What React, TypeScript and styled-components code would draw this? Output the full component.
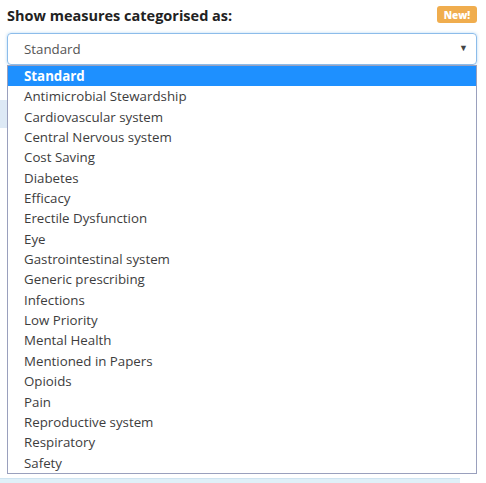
import styled, { createGlobalStyle } from "styled-components";

const GlobalStyle = createGlobalStyle`
  html, body {
    margin: 0;
    padding: 0;
    background: #fff;
  }
  body {
    font-family: "Open Sans", "Noto Sans", sans-serif;
    color: #333;
  }
`

const categories = [
    "Standard",
    "Antimicrobial Stewardship",
    "Cardiovascular system",
    "Central Nervous system",
    "Cost Saving",
    "Diabetes",
    "Efficacy",
    "Erectile Dysfunction",
    "Eye",
    "Gastrointestinal system",
    "Generic prescribing",
    "Infections",
    "Low Priority",
    "Mental Health",
    "Mentioned in Papers",
    "Opioids",
    "Pain",
    "Reproductive system",
    "Respiratory",
    "Safety",
]

const Page = styled.div`
  position: relative;
  width: 486px;
  height: 483px;
  overflow: hidden;
  padding: 6px 9px 0 7px;
  box-sizing: border-box;
`

const HeaderRow = styled.div`
  display: flex;
  justify-content: space-between;
  align-items: flex-start;
  height: 27px;
`

const Label = styled.label`
  font-size: 14.5px;
  font-weight: 700;
  color: #222;
  line-height: 20px;
`

const NewBadge = styled.span`
  display: inline-flex;
  align-items: center;
  justify-content: center;
  width: 40px;
  height: 17px;
  border-radius: 3px;
  background: #f0ad4e;
  color: #fff;
  font-size: 10px;
  font-weight: 800;
`

const SelectBox = styled.div`
  display: flex;
  align-items: center;
  justify-content: space-between;
  height: 32px;
  box-sizing: border-box;
  border: 1px solid #8cbcea;
  border-radius: 4px;
  box-shadow: 0 0 3px rgba(102, 175, 233, 0.5);
  padding: 0 8px 0 16px;
  font-size: 13.3px;
  color: #555;
`

const Arrow = styled.span`
  font-size: 9px;
  color: #444;
  margin-top: -3px;
`

const Backdrop = styled.div`
  display: flex;
  flex-direction: column;
  margin-left: -7px;
`

const BackTab = styled.div`
  width: 8px;
  height: 28px;
  margin-top: 35px;
  background: #dde9f5;
`

const BackStrip = styled.div`
  width: 460px;
  height: 5px;
  margin-top: 350px;
  background: #e0f0f8;
  border-top: 1px solid #cfe4f1;
`

const Menu = styled.ul`
  position: absolute;
  top: 65px;
  left: 7px;
  width: 470px;
  box-sizing: border-box;
  margin: 0;
  padding: 0;
  list-style: none;
  border: 1px solid #9aa0bd;
  background: #fff;
`

const MenuItem = styled.li<{ $active?: boolean }>`
  height: 20.35px;
  line-height: 21px;
  padding-left: 16px;
  font-size: 13.3px;
  color: ${(p) => (p.$active ? "#fff" : "#3d3d3d")};
  background: ${(p) => (p.$active ? "#1e90ff" : "transparent")};
  font-weight: ${(p) => (p.$active ? 700 : 400)};
  white-space: nowrap;
`

export default function App() {
    return (
        <Page>
            <GlobalStyle/>
            <HeaderRow>
                <Label>Show measures categorised as:</Label>
                <NewBadge>New!</NewBadge>
            </HeaderRow>
            <SelectBox>
                <span>Standard</span>
                <Arrow>▼</Arrow>
            </SelectBox>
            <Backdrop>
                <BackTab/>
                <BackStrip/>
            </Backdrop>
            <Menu>
                {categories.map((c, i) => (
                    <MenuItem key={c} $active={i === 0}>{c}</MenuItem>
                ))}
            </Menu>
        </Page>
    )
}
